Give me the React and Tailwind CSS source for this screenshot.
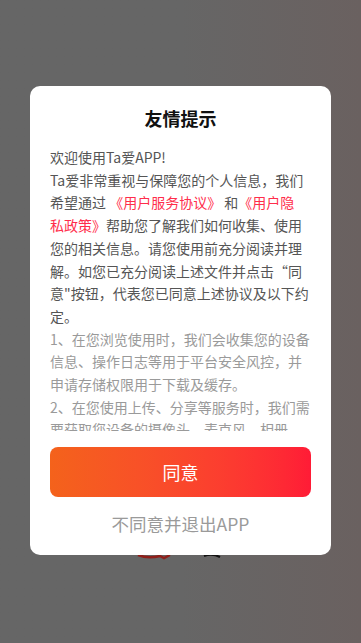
export default function App() {
  const dark = 'text-[#555555]'
  const light = 'text-[#9a9a9a]'
  const red = 'text-[#ff2d4b]'

  return (
    <div
      className="min-h-[643px] w-full flex flex-col items-center pt-[86px] bg-linear-to-r from-[#666666] via-[#666666] to-[#6a6160]"
      style={{ fontFamily: '"Noto Sans CJK SC", "Noto Sans", sans-serif' }}
    >
      <div className="relative z-10 w-[301px] bg-white rounded-[10px] flex flex-col">
        <h1 className="pt-[20px] text-center text-[18px] leading-[24px] font-bold text-[#111111]">友情提示</h1>

        {/* scrollable notice body, clipped */}
        <div className="mt-[16px] h-[285px] overflow-hidden px-[20px] text-[14px] leading-[22.7px] whitespace-nowrap">
          <div className={dark}>
            <span className="block">欢迎使用Ta爱APP!</span>
            <span className="block">Ta爱非常重视与保障您的个人信息，我们</span>
            <span className="block">
              希望通过 <span className={red}>《用户服务协议》</span> 和<span className={red}>《用户隐</span>
            </span>
            <span className="block">
              <span className={red}>私政策》</span>帮助您了解我们如何收集、使用
            </span>
            <span className="block">您的相关信息。请您使用前充分阅读并理</span>
            <span className="block">解。如您已充分阅读上述文件并点击“同</span>
            <span className="block">意"按钮，代表您已同意上述协议及以下约</span>
            <span className="block">定。</span>
          </div>
          <div className={light}>
            <span className="block">1、在您浏览使用时，我们会收集您的设备</span>
            <span className="block">信息、操作日志等用于平台安全风控，并</span>
            <span className="block">申请存储权限用于下载及缓存。</span>
            <span className="block">2、在您使用上传、分享等服务时，我们需</span>
            <span className="block">要获取您设备的摄像头、麦克风、相册</span>
          </div>
        </div>

        <button className="mt-[16px] mx-[20px] h-[50px] rounded-[8px] bg-linear-to-r from-[#f4621b] to-[#ff1b36] text-white text-[18px]">
          同意
        </button>
        <button className="mt-[15px] mb-[19px] text-[17.5px] leading-[24px] text-[#9a9a9a]">
          不同意并退出APP
        </button>
      </div>

      <svg width="110" height="8" viewBox="0 0 110 8" className="-mt-[2px]">
        <path d="M12 2 Q22 6 34 3 L38 5 L44 2" stroke="#8f1f1a" strokeWidth="2.5" fill="none" />
        <path d="M78 3 Q86 0 94 4" stroke="#111" strokeWidth="2" fill="none" />
      </svg>
    </div>
  )
}
